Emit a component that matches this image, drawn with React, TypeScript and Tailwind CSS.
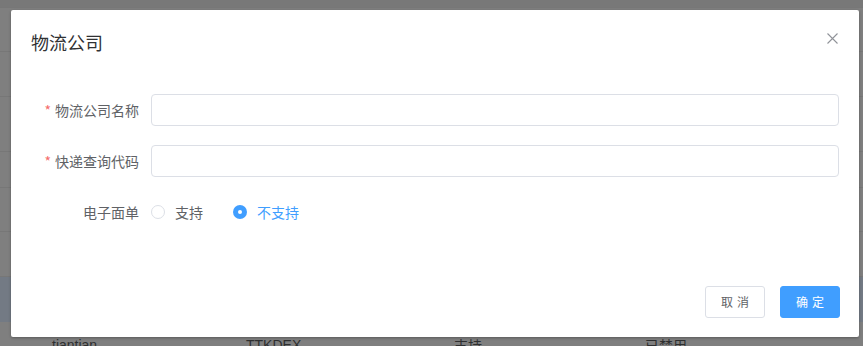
import React from "react";

const font = { fontFamily: '"Noto Sans CJK SC", "Noto Sans", sans-serif' };

function Label({ required, children }: { required?: boolean; children: React.ReactNode }) {
  return (
    <div className="w-[120px] shrink-0 pr-[12px] text-right text-[14px] leading-[32px] text-[#606266]">
      {required && <span className="mr-[4px] text-[#f56c6c]">*</span>}
      {children}
    </div>
  );
}

export default function App() {
  return (
    <div className="relative h-[346px] w-[863px] overflow-hidden bg-[#7f7f7f]" style={font}>
      {/* background page (dimmed) */}
      <div className="flex flex-col">
        <div className="h-[8px] border-b border-[#777] bg-[#787878]" />
        <div className="h-[44px] border-b border-[#777]" />
        <div className="h-[45px] border-b border-[#777]" />
        <div className="h-[55px] border-b border-[#777]" />
        <div className="h-[36px] border-b border-[#777]" />
        <div className="h-[44px] border-b border-[#777]" />
        <div className="h-[45px] border-b border-[#777]" />
        <div className="h-[45px] bg-[#737a84]" />
        <div className="relative h-[30px] text-[14px] leading-[20px] text-[#2e2f30]">
          <span className="absolute left-[52px] top-[13px]" style={{ fontFamily: '"Liberation Sans", sans-serif' }}>tiantian</span>
          <span className="absolute left-[246px] top-[13px]" style={{ fontFamily: '"Liberation Sans", sans-serif' }}>TTKDEX</span>
          <span className="absolute left-[454px] top-[13px]">支持</span>
          <span className="absolute left-[645px] top-[13px]">已禁用</span>
        </div>
      </div>

      {/* dialog */}
      <div className="absolute left-[11px] top-[10px] flex h-[327px] w-[848px] flex-col rounded-[2px] bg-white shadow-[0_1px_3px_rgba(0,0,0,0.3)]">
        <div className="relative px-[20px] pb-[10px] pt-[20px]">
          <div className="text-[18px] leading-[24px] text-[#303133]">物流公司</div>
          <svg className="absolute right-[21px] top-[23px]" width="11" height="11" viewBox="0 0 11 11">
            <path d="M0.5 0.5L10.5 10.5M10.5 0.5L0.5 10.5" stroke="#909399" strokeWidth="1.1" fill="none" />
          </svg>
        </div>
        <div className="flex flex-1 flex-col px-[20px] pt-[30px]">
          <div className="mb-[19px] flex">
            <Label required>物流公司名称</Label>
            <div className="h-[32px] flex-1 rounded-[4px] border border-[#dcdfe6]" />
          </div>
          <div className="mb-[19px] flex">
            <Label required>快递查询代码</Label>
            <div className="h-[32px] flex-1 rounded-[4px] border border-[#dcdfe6]" />
          </div>
          <div className="flex">
            <Label>电子面单</Label>
            <div className="flex items-center text-[14px] leading-[32px]">
              <div className="mr-[30px] flex items-center">
                <span className="h-[14px] w-[14px] rounded-full border border-[#dcdfe6] bg-white" />
                <span className="ml-[10px] text-[#606266]">支持</span>
              </div>
              <div className="flex items-center">
                <span className="flex h-[14px] w-[14px] items-center justify-center rounded-full bg-[#409eff]">
                  <span className="h-[4px] w-[4px] rounded-full bg-white" />
                </span>
                <span className="ml-[10px] text-[#409eff]">不支持</span>
              </div>
            </div>
          </div>
        </div>
        <div className="flex justify-end gap-[15px] px-[19px] pb-[19px]">
          <button className="flex h-[32px] w-[60px] items-center justify-center gap-[4px] rounded-[3px] border border-[#dcdfe6] bg-white text-[12px] text-[#606266]">
            <span>取</span>
            <span>消</span>
          </button>
          <button className="flex h-[32px] w-[60px] items-center justify-center gap-[4px] rounded-[3px] border border-[#409eff] bg-[#409eff] text-[12px] text-white">
            <span>确</span>
            <span>定</span>
          </button>
        </div>
      </div>
    </div>
  );
}
